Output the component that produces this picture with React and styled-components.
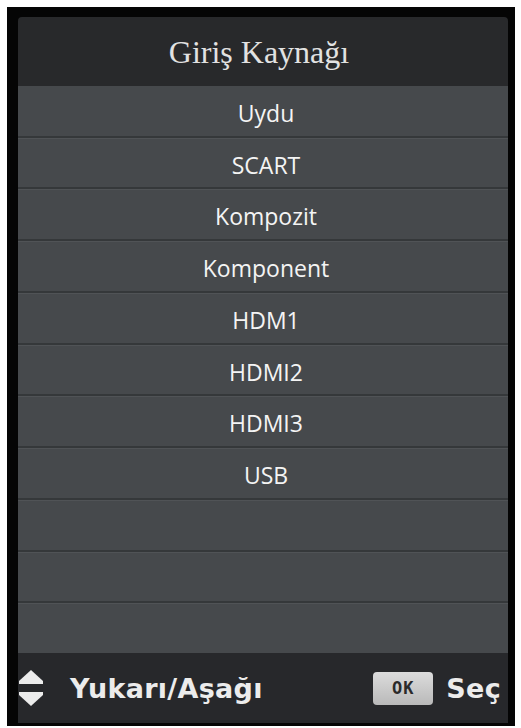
import React from 'react'
import styled, { createGlobalStyle } from "styled-components";

const sources = ["Uydu", "SCART", "Kompozit", "Komponent", "HDM1", "HDMI2", "HDMI3", "USB", "", "", ""];

export default function App() {
  return (
    <>
      <GlobalStyle />
      <Frame>
        <Panel>
          <Header>Giriş Kaynağı</Header>
          <List>
            {sources.map((name, i) => (
              <Row key={i}>{name}</Row>
            ))}
          </List>
          <Footer>
            <Hint gap="26px">
              <ArrowIcon />
              <span>Yukarı/Aşağı</span>
            </Hint>
            <Hint gap="13px">
              <OkKey>OK</OkKey>
              <span>Seç</span>
            </Hint>
          </Footer>
        </Panel>
      </Frame>
    </>
  )
}

function ArrowIcon() {
  return (
    <Arrows width="26" height="40" viewBox="0 0 26 40">
      <path d="M13 2 L25 13 L25 16 L1 16 L1 13 Z" fill="#ececec" />
      <path d="M1 24 L25 24 L25 27 L13 38 L1 27 Z" fill="#ececec" />
    </Arrows>
  )
}

const GlobalStyle = createGlobalStyle`
  html, body {
    margin: 0;
    padding: 0;
    background: #ffffff;
  }
`

const Frame = styled.div`
  width: 508px;
  height: 719px;
  margin: 7px 0 0 7px;
  box-sizing: border-box;
  padding: 10px 7px 3px 11px;
  background: #050505;
`

const Panel = styled.div`
  height: 100%;
  display: flex;
  flex-direction: column;
  border-radius: 4px 4px 0 0;
  overflow: hidden;
`

const Header = styled.div`
  height: 69px;
  flex: none;
  display: flex;
  align-items: center;
  justify-content: center;
  background: #28292b;
  color: #e2e2e2;
  font-family: "Liberation Serif", serif;
  font-size: 32px;
  padding: 2px 8px 0 0;
  box-sizing: border-box;
`

const List = styled.div`
  flex: 1;
  display: flex;
  flex-direction: column;
  background: #46494c;
`

const Row = styled.div`
  flex: 1;
  display: flex;
  align-items: center;
  justify-content: center;
  color: #f4f4f4;
  font-family: "Open Sans", sans-serif;
  font-size: 23px;
  border-top: 2px solid #35383a;
  box-shadow: inset 0 1px 0 #505356;
  box-sizing: border-box;
  padding: 4px 0 0 6px;

  &:first-child {
    border-top: none;
    box-shadow: none;
  }
`

const Footer = styled.div`
  height: 70px;
  flex: none;
  display: flex;
  align-items: center;
  justify-content: space-between;
  background: #27282b;
  padding: 0 7px 0 0;
  box-sizing: border-box;
`

const Hint = styled.div`
  display: flex;
  align-items: center;
  gap: ${(p) => p.gap};
  color: #ececec;
  font-family: "DejaVu Sans", sans-serif;
  font-weight: bold;
  font-size: 27px;
  letter-spacing: 0.3px;
`

const Arrows = styled.svg`
  display: block;
`

const OkKey = styled.div`
  width: 60px;
  height: 33px;
  display: flex;
  align-items: center;
  justify-content: center;
  border-radius: 4px;
  background: linear-gradient(#dcdcdc, #b9b9b9);
  color: #2a2a2a;
  font-family: "DejaVu Sans Mono", monospace;
  font-size: 17px;
  font-weight: bold;
  letter-spacing: 1px;
`
